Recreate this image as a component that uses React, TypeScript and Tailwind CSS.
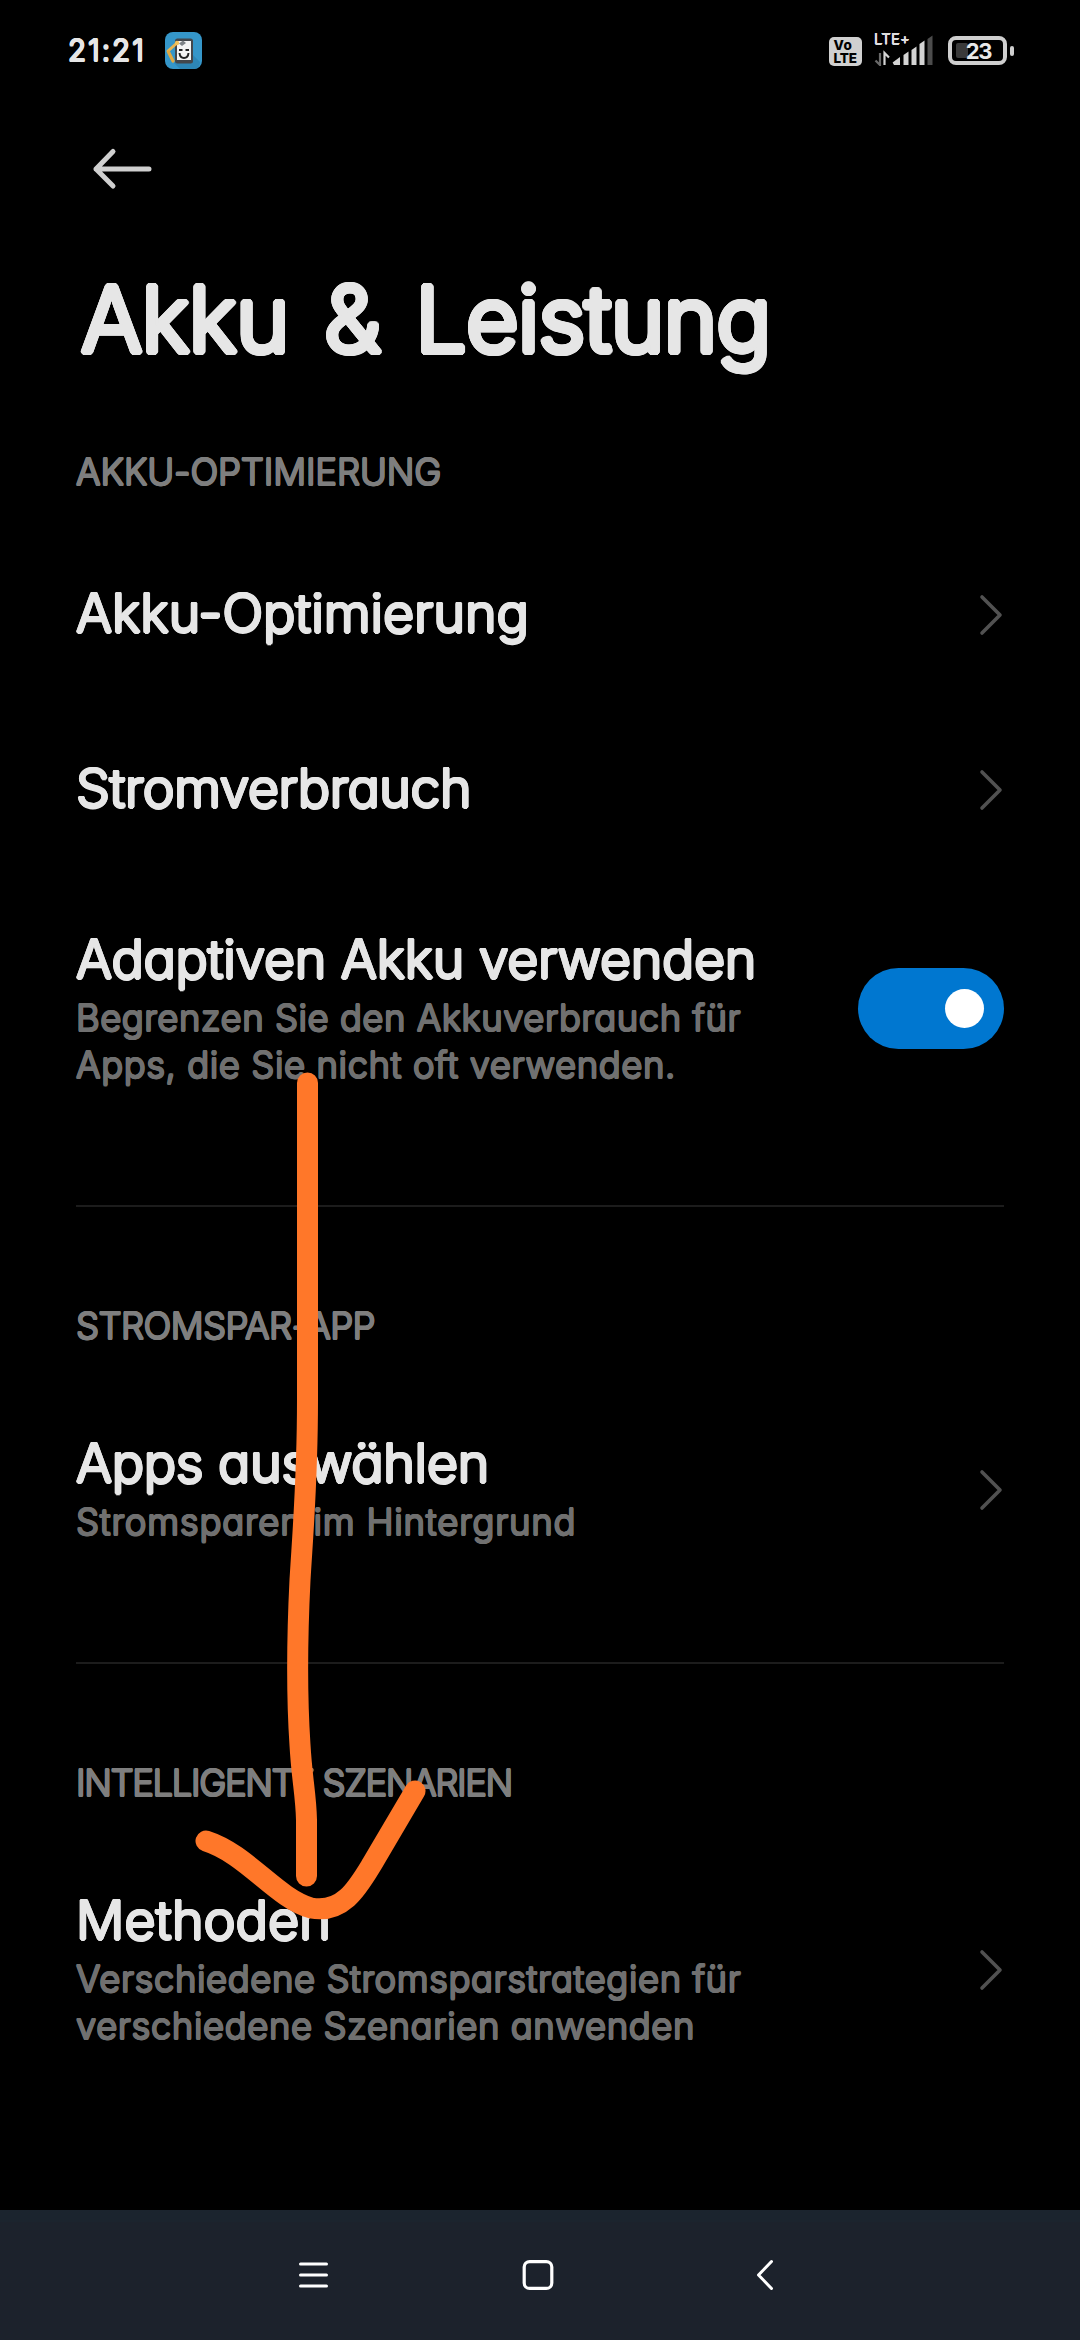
import type { ReactNode } from "react";

// Light Inter thickened by a ring of same-coloured shadows gives round stroke ends.
const FACE = "whitespace-nowrap font-['Inter',sans-serif] font-light [font-feature-settings:'cv11']";
const ROUND_L =
  "[text-shadow:3px_0_currentColor,-3px_0_currentColor,0_3px_currentColor,0_-3px_currentColor,2.1px_2.1px_currentColor,-2.1px_2.1px_currentColor,2.1px_-2.1px_currentColor,-2.1px_-2.1px_currentColor,2.8px_1.1px_currentColor,-2.8px_1.1px_currentColor,2.8px_-1.1px_currentColor,-2.8px_-1.1px_currentColor,1.1px_2.8px_currentColor,-1.1px_2.8px_currentColor,1.1px_-2.8px_currentColor,-1.1px_-2.8px_currentColor]";
const ROUND_M =
  "[text-shadow:1.5px_0_currentColor,-1.5px_0_currentColor,0_1.5px_currentColor,0_-1.5px_currentColor,1.1px_1.1px_currentColor,-1.1px_1.1px_currentColor,1.1px_-1.1px_currentColor,-1.1px_-1.1px_currentColor]";
const ROUND_S =
  "[text-shadow:1px_0_currentColor,-1px_0_currentColor,0_1px_currentColor,0_-1px_currentColor,0.7px_0.7px_currentColor,-0.7px_0.7px_currentColor,0.7px_-0.7px_currentColor,-0.7px_-0.7px_currentColor]";
const ROUND_XS =
  "[text-shadow:0.5px_0_currentColor,-0.5px_0_currentColor,0_0.5px_currentColor,0_-0.5px_currentColor]";

function Section({ children, className }: { children: ReactNode; className: string }) {
  return (
    <h2 className={`${FACE} ${ROUND_S} h-12 text-[36.5px] leading-[48px] text-[#7e7e7e] ${className}`}>
      {children}
    </h2>
  );
}

function Title({ children, className }: { children: ReactNode; className: string }) {
  return (
    <div className={`${FACE} ${ROUND_M} text-[53.6px] leading-[66px] text-[#e6e6e6] ${className}`}>
      {children}
    </div>
  );
}

function Sub({ children, className }: { children: ReactNode; className: string }) {
  return (
    <div className={`${FACE} ${ROUND_S} text-[36.5px] leading-[47px] text-[#707070] ${className}`}>
      {children}
    </div>
  );
}

function Row({ children, end, className }: { children: ReactNode; end: ReactNode; className: string }) {
  return (
    <div className={`flex items-center justify-between ${className}`}>
      <div>{children}</div>
      {end}
    </div>
  );
}

function Chevron() {
  return (
    <svg className="mt-1 h-[42px] w-[26px]" viewBox="0 0 26 42" fill="none">
      <path d="M4 3 L22 21 L4 39" stroke="#515151" strokeWidth="3.6" strokeLinecap="round" strokeLinejoin="round" />
    </svg>
  );
}

function Switch() {
  return (
    <div className="mt-[3px] flex h-[81px] w-[146px] items-center justify-end rounded-full bg-[#0077d0] pr-5">
      <div className="size-[39px] rounded-full bg-white" />
    </div>
  );
}

function AppIcon() {
  return (
    <svg className="ml-[21px] size-[37px]" viewBox="0 0 37 37" fill="none">
      <rect width="37" height="37" rx="8" fill="#3596c9" />
      <path d="M9 31 L15 37 H29 Q35 36 35 30 L28 23 Z" fill="#2d86b6" />
      <rect x="10" y="6.5" width="18" height="25" rx="2.5" fill="#43474c" />
      <rect x="12" y="9" width="14" height="19" fill="#f4f4f4" />
      <path d="M3 19 L12 11" stroke="#e9b550" strokeWidth="3" strokeLinecap="round" />
      <path d="M3.5 20 L8 29" stroke="#e0a842" strokeWidth="3.2" strokeLinecap="round" />
      <circle cx="12" cy="11" r="2.2" fill="#f2c25c" />
      <path d="M14 11.5 L18 8.5 L21 11 L17 14 Z" fill="#7d8287" />
      <path d="M14 18 H17.5 M20.5 18 H24" stroke="#222" strokeWidth="2" />
      <path d="M14.5 21 Q15 26 19 26 Q23 26 23.5 21" stroke="#222" strokeWidth="2" />
    </svg>
  );
}

function StatusBar() {
  return (
    <header className="flex h-[100px] items-start pl-[68px] pt-8">
      <div className={`${FACE} ${ROUND_S} w-[76px] text-[29.5px] leading-[37px] tracking-[2px] text-[#e6e6e6]`}>
        21:21
      </div>
      <AppIcon />
      <div className="ml-[627px] mt-[5px] flex h-[29px] w-[33px] flex-col rounded-[5px] bg-[#d0d0d0] pl-[4.5px] pt-[2px] font-['Inter',sans-serif] text-[13.5px] font-extrabold leading-[12.5px] text-black">
        <span className="tracking-[0.4px]">Vo</span>
        <span className="tracking-[-0.2px]">LTE</span>
      </div>
      <div className="ml-[12px] flex w-[60px] flex-col">
        <div className={`${FACE} ${ROUND_XS} h-3 text-[15px] leading-[13px] tracking-[0.2px] text-[#dedede]`}>LTE+</div>
        <svg className="-mt-[9px] h-[31px] w-[60px]" viewBox="0 0 60 31" fill="none">
          <path d="M6 18 V30 L1.5 25.5" stroke="#6a6a6a" strokeWidth="2.2" />
          <path d="M10.5 30 V18 L15 22.5" stroke="#d4d4d4" strokeWidth="2.2" />
          <path d="M20 30 L18.6 27.5 L26 22 V30 Z" fill="#d4d4d4" />
          <path d="M29.5 30 V20 L34.5 16.5 V30 Z" fill="#d4d4d4" />
          <path d="M37.5 30 V15 L42.5 11.5 V30 Z" fill="#d4d4d4" />
          <path d="M45.5 30 V9 L50.5 5.5 V30 Z" fill="#d4d4d4" />
          <path d="M53.5 30 V4 L58.5 0.5 V30 Z" fill="#4c4c4c" />
        </svg>
      </div>
      <div className="ml-[14px] mt-1 flex items-center">
        <div className="relative flex h-[29px] w-[59px] items-center justify-center rounded-[8px] border-4 border-[#cfcfcf]">
          <div className="absolute left-[3.5px] top-[3px] h-[15px] w-3 rounded-[2px] bg-[#3a3a3a]" />
          <span className="relative ml-0.5 font-['Inter',sans-serif] text-[22px] font-bold leading-none tracking-[-1.4px] text-[#e8e8e8]">23</span>
        </div>
        <div className="ml-[3px] h-[10px] w-1 rounded-full bg-[#cfcfcf]" />
      </div>
    </header>
  );
}

function Annotation() {
  return (
    <svg className="pointer-events-none absolute left-0 top-0 h-[2340px] w-[1080px]" viewBox="0 0 1080 2340" fill="none">
      <g stroke="#ff7729" strokeWidth="21" strokeLinecap="round" strokeLinejoin="round">
        <path d="M307.5 1083 V1400 C307.5 1480 303 1530 300 1580 C297 1640 297 1700 300 1745 C302 1780 306 1795 306.5 1820 V1876" />
        <path d="M206 1841 C247 1854 276 1898 311 1908 C343 1914 358 1887 372 1864 L415 1791" />
      </g>
    </svg>
  );
}

export default function App() {
  return (
    <div className="relative flex h-[2340px] w-[1080px] flex-col overflow-hidden bg-black">
      <StatusBar />
      <main className="flex flex-col px-[76px]">
        <svg className="ml-[15px] mt-[46px] h-[46px] w-[64px]" viewBox="0 0 64 46" fill="none">
          <path d="M22 5.5 L5 23 L22 40 M5 23 H58" stroke="#cfcfcf" strokeWidth="5" strokeLinecap="round" strokeLinejoin="round" />
        </svg>
        <h1 className={`${FACE} ${ROUND_L} ml-[5px] mt-[72px] h-[110px] text-[91px] leading-[110px] tracking-[-0.8px] text-[#e6e6e6] [word-spacing:10.5px]`}>
          Akku &amp; Leistung
        </h1>

        <Section className="mt-[74px] tracking-[-0.15px]">AKKU-OPTIMIERUNG</Section>
        <Row className="mt-[29px] h-[176px]" end={<Chevron />}>
          <Title className="tracking-normal">Akku-Optimierung</Title>
        </Row>
        <Row className="h-[174px]" end={<Chevron />}>
          <Title className="tracking-[-0.46px]">Stromverbrauch</Title>
        </Row>
        <Row className="h-[264px]" end={<Switch />}>
          <Title className="mb-[3px] tracking-[-0.27px]">Adaptiven Akku verwenden</Title>
          <Sub className="tracking-[0.48px]">Begrenzen Sie den Akkuverbrauch für</Sub>
          <Sub className="tracking-[0.55px]">Apps, die Sie nicht oft verwenden.</Sub>
        </Row>

        <div className="mt-[66px] h-0.5 bg-[#1c1c1c]" />
        <Section className="mt-[95px] tracking-[-0.6px]">STROMSPAR-APP</Section>
        <Row className="h-[275px]" end={<Chevron />}>
          <Title className="mb-[3px] tracking-[-0.25px]">Apps auswählen</Title>
          <Sub className="tracking-[0.78px]">Stromsparen im Hintergrund</Sub>
        </Row>

        <div className="mt-[37px] h-0.5 bg-[#1c1c1c]" />
        <Section className="mt-[95px] tracking-[-1.4px]">INTELLIGENTE SZENARIEN</Section>
        <Row className="h-[322px]" end={<Chevron />}>
          <Title className="mb-[3px] tracking-[0.2px]">Methoden</Title>
          <Sub className="tracking-[0.54px]">Verschiedene Stromsparstrategien für</Sub>
          <Sub className="tracking-[0.55px]">verschiedene Szenarien anwenden</Sub>
        </Row>
      </main>

      <nav className="mt-auto flex h-[130px] items-center border-t-[12px] border-[#1b242e] bg-[#1c222c] pb-3 pl-[298px]">
        <svg className="h-8 w-8" viewBox="0 0 32 32" fill="none">
          <path d="M2.5 5 H28.5 M2.5 16 H28.5 M2.5 27 H28.5" stroke="#fff" strokeWidth="3" strokeLinecap="round" />
        </svg>
        <svg className="ml-48 h-8 w-8" viewBox="0 0 32 32" fill="none">
          <rect x="2.2" y="2.6" width="27.6" height="26.8" rx="5.5" stroke="#fff" strokeWidth="3.2" />
        </svg>
        <svg className="ml-[201px] h-8 w-5" viewBox="0 0 20 32" fill="none">
          <path d="M16.5 2.5 L3.5 16 L16.5 29.5" stroke="#fff" strokeWidth="3" strokeLinecap="round" strokeLinejoin="round" />
        </svg>
      </nav>
      <Annotation />
    </div>
  );
}
